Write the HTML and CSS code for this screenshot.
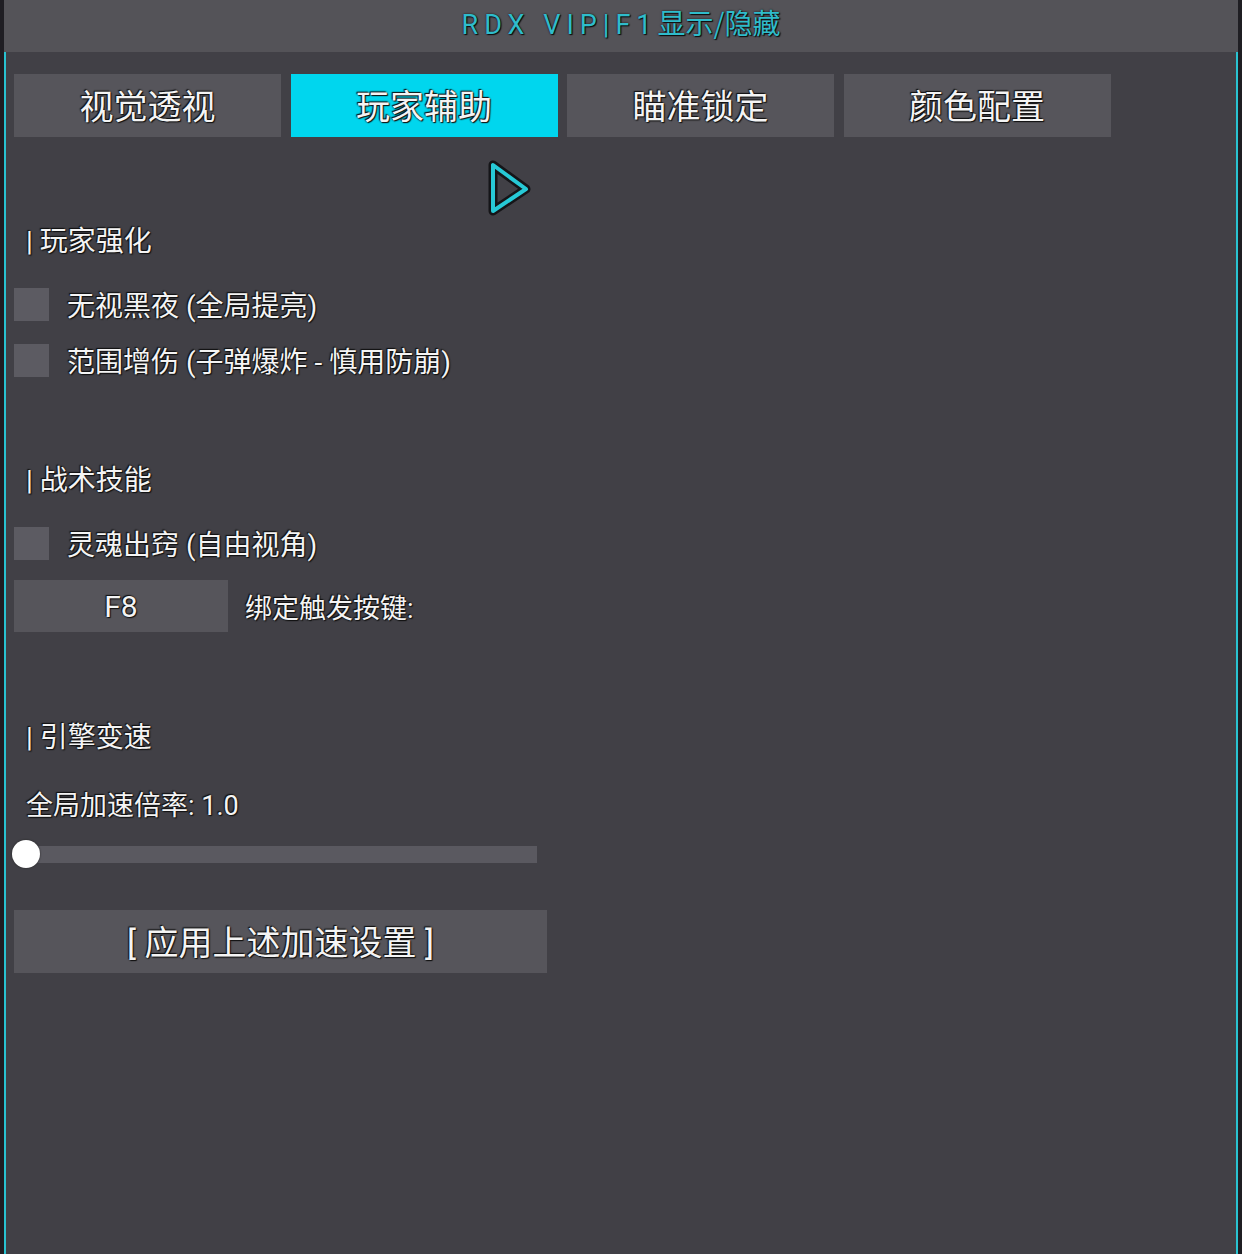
FILE: index.html
```html
<!DOCTYPE html>
<html lang="zh-CN">
<head>
  <meta charset="UTF-8">
  <title>RDX VIP</title>
  <link rel="stylesheet" href="styles.css">
</head>
<body>
  <div class="window">
    <div class="titlebar">RDX VIP|F1<span class="cn">显示/隐藏</span></div>
    <div class="content">
      <div class="tabs">
        <div class="tab">视觉透视</div>
        <div class="tab active">玩家辅助</div>
        <div class="tab">瞄准锁定</div>
        <div class="tab">颜色配置</div>
      </div>

      <div class="section first">| 玩家强化</div>
      <label class="check"><span class="box"></span>无视黑夜 (全局提亮)</label>
      <label class="check"><span class="box"></span>范围增伤 (子弹爆炸 - 慎用防崩)</label>

      <div class="section">| 战术技能</div>
      <label class="check"><span class="box"></span>灵魂出窍 (自由视角)</label>
      <div class="bind">
        <div class="key">F8</div>
        <span>绑定触发按键:</span>
      </div>

      <div class="section">| 引擎变速</div>
      <div class="speed">全局加速倍率: 1.0</div>
      <div class="slider"><span class="knob"></span></div>
      <div class="apply">[ 应用上述加速设置 ]</div>

      <svg class="cursor" width="48" height="62" viewBox="0 0 48 62">
        <polygon points="7,7 7,53 40,31" fill="none" stroke="#151518" stroke-width="9" stroke-linejoin="round"/>
        <polygon points="7,7 7,53 40,31" fill="none" stroke="#27c9d6" stroke-width="4" stroke-linejoin="round"/>
      </svg>
    </div>
  </div>
</body>
</html>
```

FILE: styles.css
```css
body {
  margin: 0;
  background: #1f1e23;
  font-family: "Roboto", "Noto Sans CJK SC", sans-serif;
  color: #f4f4f4;
}
.window {
  margin-left: 4px;
  width: 1234px;
  height: 1254px;
  display: flex;
  flex-direction: column;
}
.titlebar {
  height: 52px;
  background: #545358;
  color: #2fbccb;
  font-size: 27px;
  letter-spacing: 6px;
  text-align: center;
  line-height: 44px;
  text-shadow: 0 0 2px #0c0c0e, 1px 1px 1px #0c0c0e;
}
.titlebar .cn {
  letter-spacing: 0;
  font-family: "Noto Sans CJK SC", sans-serif;
  font-size: 28px;
}
.content {
  flex: 1;
  position: relative;
  background: #414046;
  border-left: 2px solid #29c3d1;
  border-right: 2px solid #29c3d1;
  padding: 22px 8px 0 8px;
  text-shadow: 0 0 2px #111, 1px 1px 1px #111, -1px -1px 1px #111;
}
.tabs {
  display: flex;
  gap: 9.5px;
}
.tab {
  width: 267px;
  height: 63px;
  background: #56555b;
  font-size: 34px;
  line-height: 66px;
  text-align: center;
  overflow: hidden;
}
.tab.active {
  background: #00d6ee;
}
.section {
  margin-top: 83px;
  padding-left: 12px;
  height: 36px;
  line-height: 40px;
  font-size: 28px;
}
.section.first {
  margin-top: 85px;
}
.check {
  display: flex;
  align-items: center;
  gap: 18px;
  height: 36px;
  margin-top: 20px;
  font-size: 28px;
}
.section + .check {
  margin-top: 28px;
}
.box {
  width: 35px;
  height: 33px;
  background: #5c5b62;
}
.bind {
  display: flex;
  align-items: center;
  gap: 17px;
  margin-top: 19px;
  font-size: 27px;
}
.key {
  width: 214px;
  height: 52px;
  background: #56555b;
  text-align: center;
  line-height: 54px;
  font-size: 30px;
}
.bind + .section {
  margin-top: 86px;
}
.speed {
  margin-top: 33px;
  padding-left: 12px;
  height: 36px;
  line-height: 38px;
  font-size: 27px;
}
.slider {
  position: relative;
  margin: 23px 0 0 12px;
  width: 511px;
  height: 17px;
  background: #5a5960;
}
.knob {
  position: absolute;
  left: -14px;
  top: -6px;
  width: 28px;
  height: 28px;
  border-radius: 50%;
  background: #fff;
  box-shadow: 0 0 2px #222;
}
.apply {
  margin-top: 47px;
  width: 533px;
  height: 63px;
  background: #56555b;
  font-size: 34px;
  line-height: 66px;
  text-align: center;
  overflow: hidden;
}
.cursor {
  position: absolute;
  left: 480px;
  top: 106px;
}
```
